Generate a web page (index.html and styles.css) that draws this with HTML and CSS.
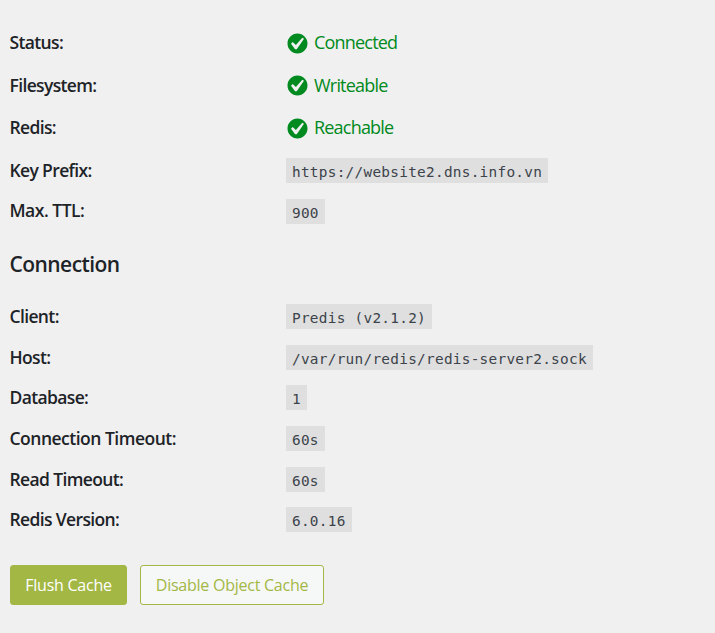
FILE: index.html
```html
<!DOCTYPE html>
<html lang="en">
<head>
<meta charset="utf-8">
<title>Redis Object Cache</title>
<link rel="stylesheet" href="styles.css">
</head>
<body>
<svg class="defs" width="0" height="0" aria-hidden="true"><symbol id="yes" viewBox="0 0 20 20"><path fill="currentColor" d="M10 2c-4.42 0-8 3.58-8 8s3.58 8 8 8 8-3.58 8-8-3.58-8-8-8zm-.615 12.66h-1.34l-3.24-4.54 1.341-1.25 2.569 2.4 5.141-5.931 1.34.94-5.811 8.381z"/></symbol></svg>
<main>
<dl class="status">
<div class="row"><dt>Status:</dt><dd class="ok"><svg><use href="#yes"/></svg><span>Connected</span></dd></div>
<div class="row"><dt>Filesystem:</dt><dd class="ok"><svg><use href="#yes"/></svg><span>Writeable</span></dd></div>
<div class="row"><dt>Redis:</dt><dd class="ok"><svg><use href="#yes"/></svg><span>Reachable</span></dd></div>
<div class="row"><dt>Key Prefix:</dt><dd><code>https://website2.dns.info.vn</code></dd></div>
<div class="row last"><dt class="ttl">Max. TTL:</dt><dd><code>900</code></dd></div>
</dl>
<h2>Connection</h2>
<dl class="connection">
<div class="row"><dt>Client:</dt><dd><code>Predis (v2.1.2)</code></dd></div>
<div class="row"><dt>Host:</dt><dd><code>/var/run/redis/redis-server2.sock</code></dd></div>
<div class="row"><dt>Database:</dt><dd><code>1</code></dd></div>
<div class="row"><dt class="wide">Connection Timeout:</dt><dd><code>60s</code></dd></div>
<div class="row"><dt>Read Timeout:</dt><dd><code>60s</code></dd></div>
<div class="row"><dt>Redis Version:</dt><dd><code>6.0.16</code></dd></div>
</dl>
<div class="actions"><button class="primary">Flush Cache</button><button>Disable Object Cache</button></div>
</main>
</body>
</html>
```
FILE: styles.css
```css
* { box-sizing: border-box; }
body { margin: 0; background: #f0f0f1; color: #1d2327; font-family: "Open Sans", sans-serif; font-size: 17.5px; }
.defs { display: none; }
main { padding: 21.5px 9px 0 10px; }
dl { margin: 0; }
.row { display: grid; grid-template-columns: 276px 1fr; align-items: center; height: 40.6px; }
.status .row { height: 42.5px; }
.status .last { height: 39px; }
dt { margin-left: -.5px; padding-bottom: 1px; font-weight: 560; letter-spacing: -.64px; white-space: nowrap; }
.ttl { padding-bottom: 2px; }
.ttl, .wide { letter-spacing: -.5px; }
dd { margin: 0; }
.ok { display: flex; align-items: center; gap: 4px; color: #008a20; font-size: 18px; letter-spacing: -.8px; }
.ok svg { width: 25px; height: 25px; margin: 1px 0 0 -1px; }
.ok span { padding-bottom: 1px; }
code { display: block; width: max-content; height: 25px; padding: 0 6px; background: #dfdfe0; color: #3c434a; font: 14.4px/28px "DejaVu Sans Mono", monospace; letter-spacing: .27px; }
h2 { margin: 18px 0 18px -.5px; font-size: 21px; line-height: 30px; font-weight: 560; letter-spacing: -.55px; }
.actions { display: flex; gap: 13px; margin-top: 25px; }
button { height: 40px; width: 184px; padding: 0; border: 1px solid #a3b745; border-radius: 3px; background: #f6f7f7; color: #a3b745; font: 16px "Open Sans", sans-serif; letter-spacing: -.25px; white-space: nowrap; }
.primary { width: 117px; background: #a3b745; color: #fff; }
```
